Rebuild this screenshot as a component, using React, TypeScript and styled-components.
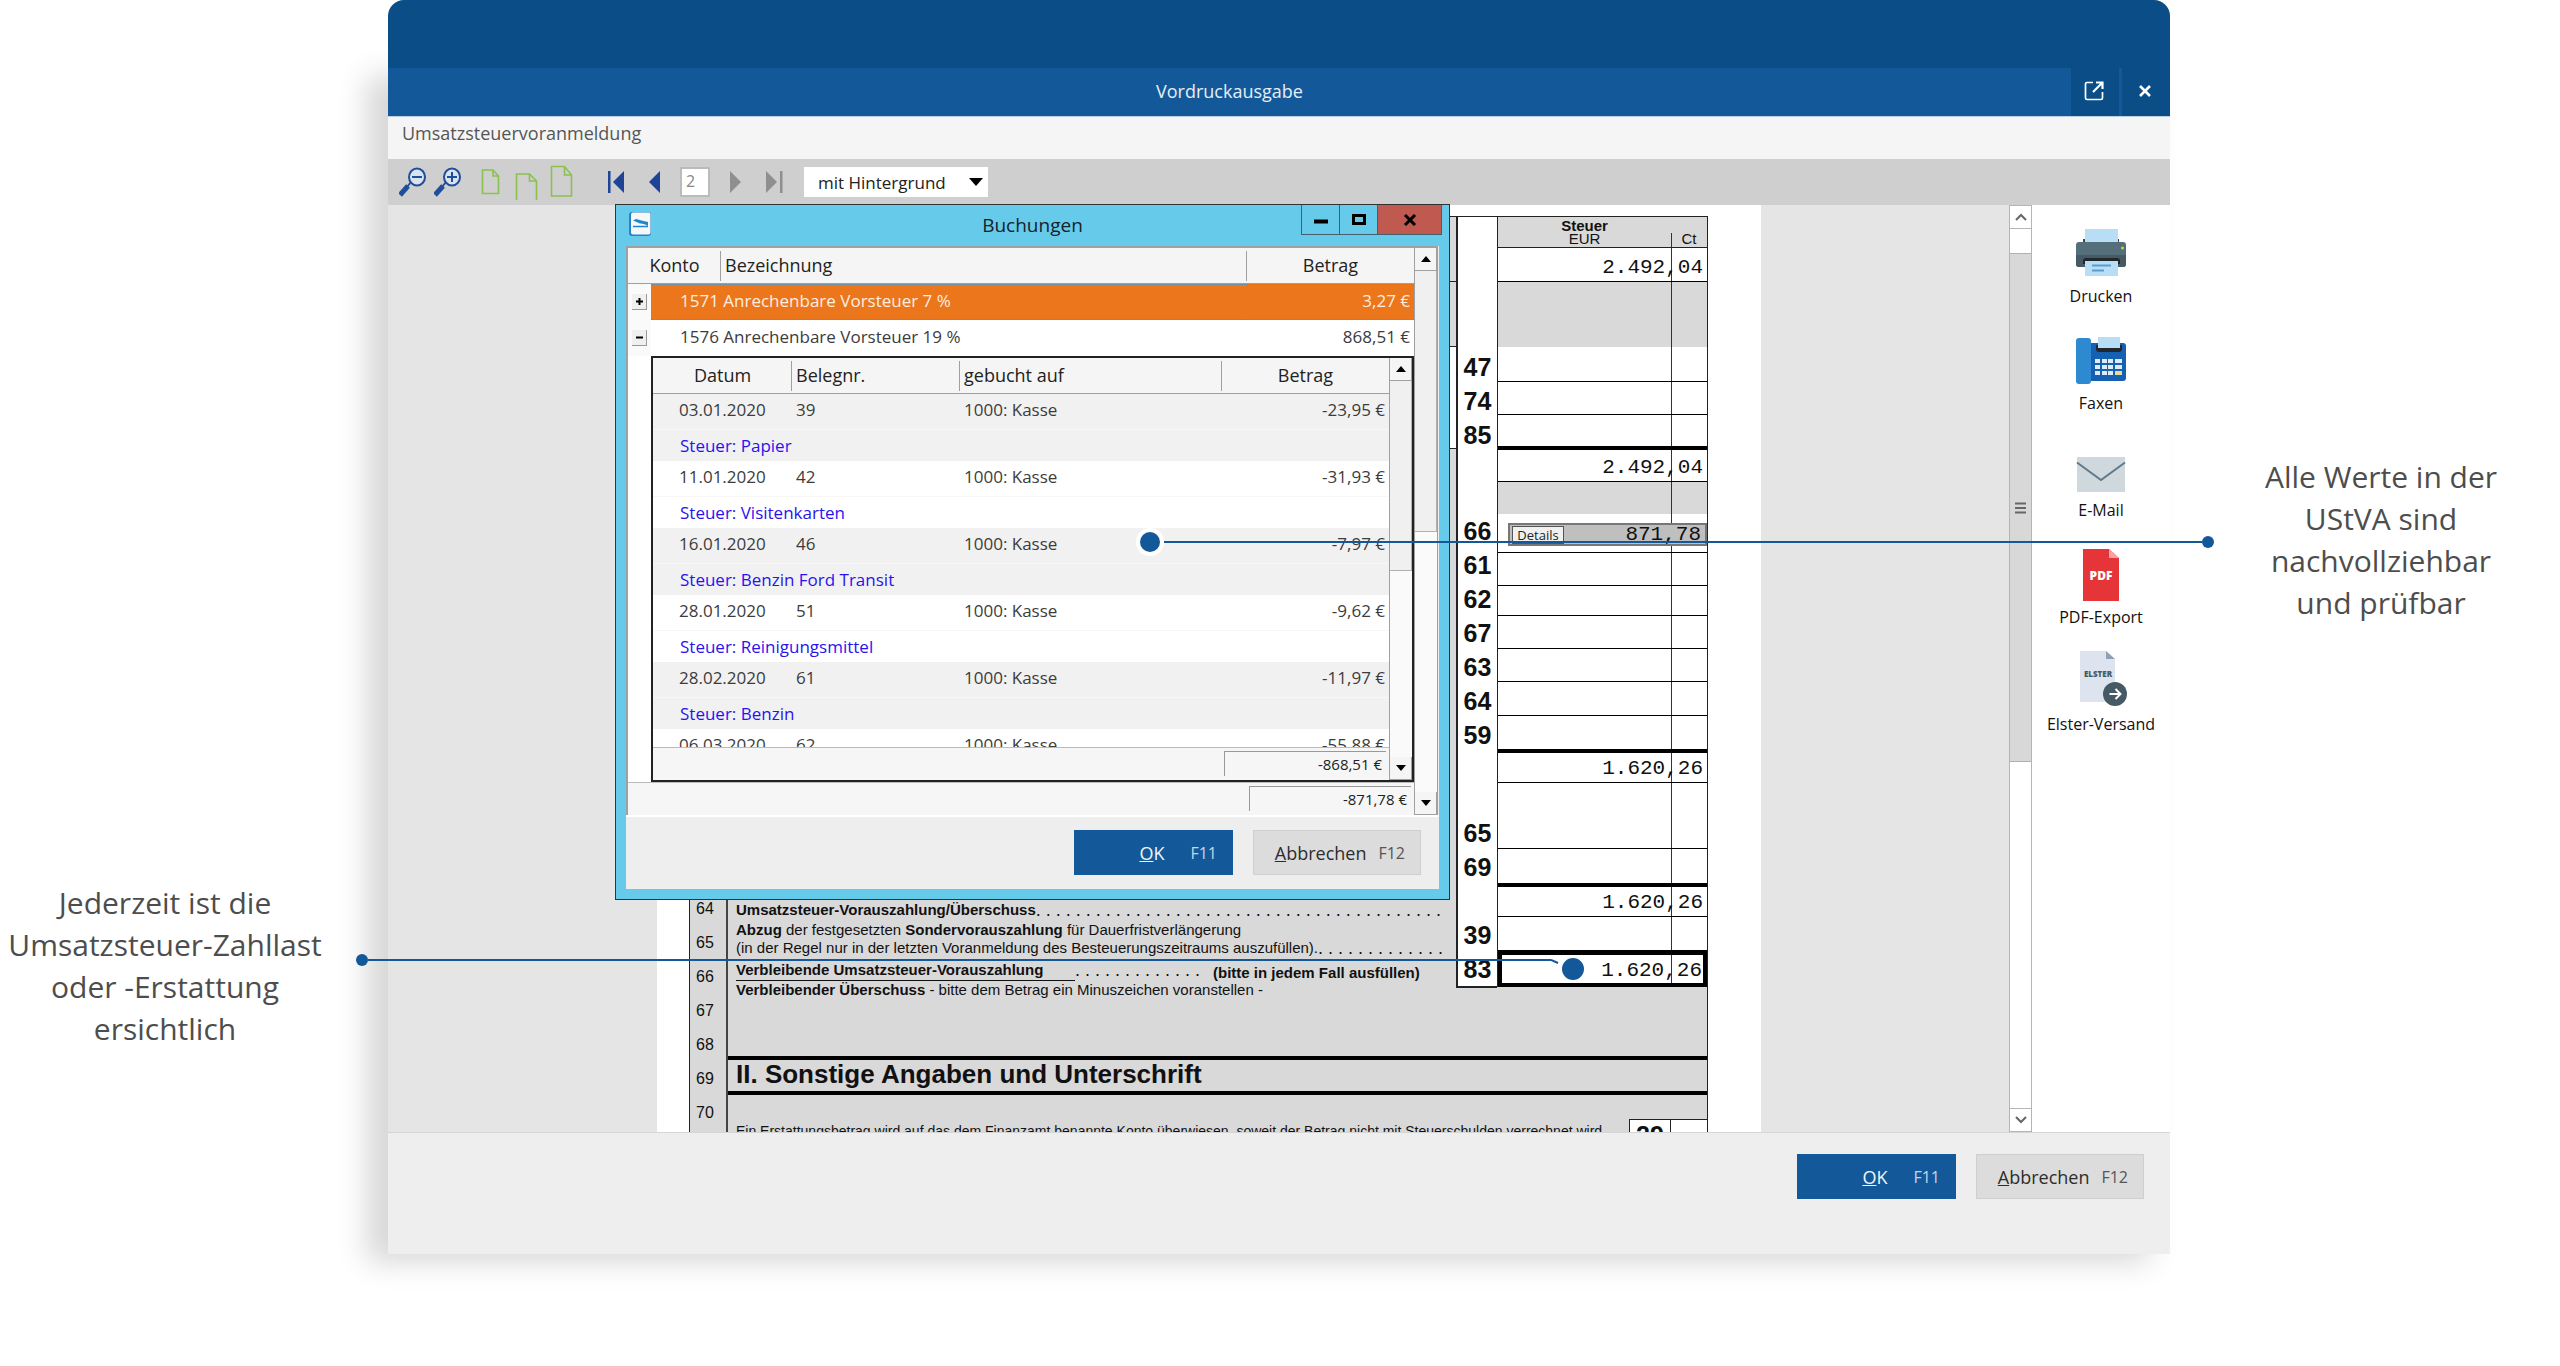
import React from "react";
import styled, { createGlobalStyle, css } from "styled-components";

const navy = "#0b4d86";
const blue = "#135999";
const sky = "#66cbea";
const formGrey = "#d9d9d9";
const ink = "#222";
const uiFont = `"Open Sans", "Noto Sans", sans-serif`;
const formFont = `"Liberation Sans", Arial, sans-serif`;

const GlobalStyle = createGlobalStyle`
  *, *::before, *::after { box-sizing: border-box; }
  body { margin: 0; background: #fff; font-family: ${uiFont}; color: #333; }
  button, input, select { font-family: inherit; }
  button { cursor: pointer; }
  table { border-collapse: separate; border-spacing: 0; table-layout: fixed; width: 100%; }
  th, td { padding: 0; font-weight: 400; text-align: left; }
`;

/* ---------- page and callouts ---------- */

const Stage = styled.main`
  display: grid;
  grid-template-columns: 388px minmax(0, 1fr) 390px;
  height: 100vh;
  padding-bottom: 112px;
  overflow: hidden;
`;

const Callout = styled.p<{ $side: "left" | "right" }>`
  margin: 0;
  text-align: center;
  font-size: 30px;
  line-height: 42px;
  color: #4d4d4d;
  padding: ${(p) => (p.$side === "left" ? "882px 58px 0 0" : "456px 0 0 32px")};
`;

const Line = styled.span`
  display: block;
`;

const Connector = styled.div<{ $side: "left" | "right" }>`
  position: absolute;
  display: flex;
  pointer-events: none;
  ${(p) =>
    p.$side === "right"
      ? css`
          top: 528px;
          left: 748px;
          right: -44px;
          align-items: center;
        `
      : css`
          top: 954px;
          left: -32px;
          width: 1231px;
          align-items: flex-start;
        `}
`;

const EndDot = styled.span`
  width: 12px;
  height: 12px;
  border-radius: 50%;
  background: ${blue};
`;

const RingDot = styled.span<{ $low?: boolean }>`
  width: 28px;
  height: 28px;
  border-radius: 50%;
  border: ${(p) => (p.$low ? "3px" : "4px")} solid #fff;
  margin-top: ${(p) => (p.$low ? "1px" : "0")};
  background: ${blue};
`;

const Wire = styled.span<{ $low?: boolean }>`
  flex: 1;
  height: 2px;
  background: ${blue};
  margin-top: ${(p) => (p.$low ? "5px" : "0")};
`;

const Bend = styled.svg`
  width: 8px;
  height: 6px;
  margin-top: 5px;
`;

/* ---------- main window ---------- */

const Window = styled.section`
  position: relative;
  display: flex;
  flex-direction: column;
  min-height: 0;
`;

const TopBand = styled.div`
  height: 68px;
  flex: none;
  background: ${navy};
  border-radius: 16px 16px 0 0;
  position: relative;
`;

const Shell = styled.div`
  flex: 1;
  min-height: 0;
  display: flex;
  flex-direction: column;
  background: #eee;
  box-shadow: -21px 8px 28px rgba(0, 0, 0, 0.16);
`;

const TitleBar = styled.header`
  display: flex;
  flex: none;
  height: 49px;
  background: ${blue};
  border-bottom: 1px solid #b8cfe3;
`;

const Title = styled.h1`
  flex: 1;
  margin: 0;
  text-align: center;
  font-size: 18px;
  line-height: 46px;
  font-weight: 400;
  color: #e6eef6;
`;

const TitleActions = styled.div`
  display: flex;
  gap: 3px;
`;

const TitleButton = styled.button`
  width: 48px;
  border: 0;
  padding: 0 2px 2px 0;
  background: ${navy};
  display: grid;
  place-items: center;
`;

const SubTitle = styled.div`
  flex: none;
  height: 42px;
  padding-left: 14px;
  background: #f5f5f5;
  font-size: 18px;
  line-height: 32px;
  color: #555;
`;

const Toolbar = styled.div`
  flex: none;
  height: 46px;
  display: flex;
  align-items: center;
  gap: 9px;
  padding-left: 7px;
  background: #cfcfcf;
`;

const ToolGroup = styled.div<{ $apart?: boolean }>`
  display: flex;
  align-items: center;
  margin-left: ${(p) => (p.$apart ? "9px" : "0")};
`;

const ToolButton = styled.button<{ $wide?: boolean }>`
  width: ${(p) => (p.$wide ? "38px" : "35px")};
  height: 36px;
  border: 0;
  padding: 0;
  background: none;
  display: grid;
  place-items: center;
`;

const PageInput = styled.input`
  width: 30px;
  height: 30px;
  margin: 0 7px;
  padding: 0 4px 2px;
  border: 2px solid #bbb;
  background: #fff;
  font-size: 16px;
  color: #888;
`;

const SelectBox = styled.div`
  display: grid;
  align-items: center;
  width: 184px;
  height: 30px;
  margin-left: 2px;
  background: #fff;
  & > * {
    grid-area: 1 / 1;
  }
  svg {
    justify-self: end;
    margin-right: 5px;
    pointer-events: none;
  }
`;

const Select = styled.select`
  appearance: none;
  width: 100%;
  height: 30px;
  border: 0;
  padding: 0 24px 0 14px;
  background: transparent;
  font-size: 17px;
  color: #222;
`;

const Workspace = styled.div`
  flex: 1;
  min-height: 0;
  display: flex;
  background: #fff;
`;

const Viewer = styled.div`
  flex: 1;
  min-width: 0;
  display: flex;
  justify-content: center;
  align-items: flex-start;
  overflow: hidden;
  padding-left: 21px;
  background: #e5e5e5;
`;

const Scroller = styled.div`
  flex: none;
  width: 23px;
  display: flex;
  flex-direction: column;
  border: 1px solid #b5b5b5;
  background: #fff;
`;

const ScrollerButton = styled.button<{ $edge: "top" | "bottom" }>`
  height: 23px;
  border: 0 solid #b5b5b5;
  ${(p) => (p.$edge === "top" ? "border-bottom-width: 1px;" : "border-top-width: 1px;")}
  padding: 0;
  background: #fff;
  display: grid;
  place-items: center;
`;

const ScrollerTrack = styled.div`
  flex: 1;
  display: flex;
  flex-direction: column;
  padding: 24px 0 346px;
`;

const ScrollerThumb = styled.div`
  flex: 1;
  display: grid;
  place-items: center;
  border: solid #b0b0b0;
  border-width: 1px 0;
  background: #d8d8d8;
`;

const Sidebar = styled.nav`
  flex: none;
  width: 138px;
  display: flex;
  flex-direction: column;
  align-items: center;
  padding-top: 22px;
`;

const SideAction = styled.button`
  width: 138px;
  height: 107px;
  border: 0;
  padding: 0;
  background: none;
  display: flex;
  flex-direction: column;
  align-items: center;
  font-size: 16px;
  line-height: 22px;
  color: #111;
`;

const SideIcon = styled.svg`
  width: 64px;
  height: 58px;
  flex: none;
  overflow: visible;
`;

const Footer = styled.footer`
  flex: none;
  display: flex;
  justify-content: flex-end;
  gap: 20px;
  height: 122px;
  padding: 21px 26px 0 0;
  border-top: 1px solid #d5d5d5;
  background: #eee;
`;

const ActionButton = styled.button<{ $primary?: boolean }>`
  width: ${(p) => (p.$primary ? "159px" : "168px")};
  height: 45px;
  display: flex;
  align-items: center;
  justify-content: flex-end;
  gap: ${(p) => (p.$primary ? "26px" : "12px")};
  padding: 0 15px 0 0;
  border: 1px solid ${(p) => (p.$primary ? blue : "#cfcfcf")};
  background: ${(p) => (p.$primary ? blue : "#dcdcdc")};
  color: ${(p) => (p.$primary ? "#f0f5fa" : "#2d2d2d")};
  font-size: 18px;
  line-height: 24px;
  font-weight: 500;
`;

const Hotkey = styled.span<{ $primary?: boolean }>`
  font-size: 16px;
  font-weight: 400;
  color: ${(p) => (p.$primary ? "#c4d6e8" : "#555")};
`;

/* ---------- tax form ---------- */

const Paper = styled.article`
  flex: none;
  width: 1104px;
  padding: 11px 53px 0 32px;
  background: #fff;
  font-family: ${formFont};
  color: #111;
`;

const Sheet = styled.div`
  display: flex;
  border: 1px solid ${ink};
  background: ${formGrey};
`;

const LineNumbers = styled.div`
  flex: none;
  width: 38px;
  padding: 675px 6px 0 0;
  border-right: 2px solid #444;
  text-align: center;
  font-size: 16px;
  line-height: 34px;
`;

const SheetBody = styled.div`
  flex: 1;
  min-width: 0;
`;

const CalcSection = styled.section`
  display: flex;
  align-items: flex-start;
`;

const Descriptions = styled.div`
  flex: 1;
  min-width: 0;
`;

const Band = styled.div<{ $tall?: boolean }>`
  height: ${(p) => (p.$tall ? "102px" : "65px")};
  border-bottom: 1px solid ${ink};
  background: ${(p) => (p.$tall ? "#fff" : formGrey)};
`;

const FormText = styled.div`
  padding: 452px 6px 0 8px;
  font-size: 15px;
  line-height: 18px;
`;

const FormLine = styled.div<{ $space?: number }>`
  display: flex;
  white-space: pre;
  margin-bottom: ${(p) => p.$space ?? 0}px;
`;

const Underlined = styled.b`
  width: 339px;
  height: 20px;
  border-bottom: 1px solid #111;
`;

const Leader = styled.span`
  font-size: 18px;
`;

const Hint = styled.b`
  padding: 3px 0 0 13px;
  line-height: 17px;
`;

const Codes = styled.div`
  flex: none;
  width: 41px;
  padding-top: 133px;
  border: solid ${ink};
  border-width: 0 0 2px 2px;
  background: #fff;
  font-size: 25px;
  line-height: 34px;
  font-weight: 700;
  text-align: center;
`;

const CodeGroup = styled.div<{ $before?: number }>`
  display: flex;
  flex-direction: column;
  padding-top: ${(p) => p.$before ?? 0}px;
`;

const Amounts = styled.table`
  flex: none;
  width: 210px;
  border-left: 1px solid ${ink};
  background: #fff;
`;

const AmountHead = styled.th<{ $cents?: boolean }>`
  height: 31px;
  vertical-align: bottom;
  text-align: center;
  font-size: 15px;
  line-height: 13px;
  padding-bottom: 2px;
  border-bottom: 1px solid ${ink};
  background: ${formGrey};
  ${(p) =>
    p.$cents &&
    css`
      background: linear-gradient(#333, #333) left bottom / 1px 14px no-repeat ${formGrey};
    `}
`;

const AmountCell = styled.td<{ $h: number; $rule: "none" | "thin" | "thick" | "box"; $grey?: boolean }>`
  height: ${(p) => p.$h}px;
  vertical-align: bottom;
  text-align: right;
  padding: 0 4px 1px 0;
  font-family: "Liberation Mono", "Courier New", monospace;
  font-size: 21px;
  line-height: 24px;
  border: 0 solid #000;
  border-bottom-width: ${(p) => ({ none: 0, thin: 1, thick: 4, box: 4 })[p.$rule]}px;
  background: linear-gradient(#333, #333) 173px 0 / 1px 100% no-repeat ${(p) => (p.$grey ? formGrey : "#fff")};
  background-origin: border-box;
  ${(p) =>
    p.$rule === "box" &&
    css`
      border-width: 4px;
      padding: 0 1px 0 0;
    `}
`;

const DetailField = styled.div`
  display: flex;
  align-items: center;
  justify-content: space-between;
  height: 23px;
  margin: 0 -4px 5px 10px;
  padding: 0 4px 0 2px;
  border: 2px solid #777;
  background: #bfbfbf;
`;

const DetailButton = styled.button`
  width: 52px;
  height: 18px;
  padding: 0;
  border: 1px solid #555;
  background: #f0f0f0;
  font-family: ${uiFont};
  font-size: 13px;
  line-height: 16px;
  color: #222;
`;

const Gap = styled.div`
  height: 57px;
`;

const SectionTitle = styled.h2`
  margin: 0;
  padding: 0 8px 3px;
  border: solid #000;
  border-width: 4px 0;
  font-size: 26px;
  line-height: 28px;
  font-weight: 700;
`;

const RefundRow = styled.div`
  display: flex;
  justify-content: space-between;
  padding-top: 24px;
`;

const RefundText = styled.p`
  margin: 0;
  padding: 3px 0 0 8px;
  font-size: 14px;
  line-height: 18px;
  white-space: nowrap;
`;

const RefundBox = styled.div`
  flex: none;
  display: flex;
  border: solid ${ink};
  border-width: 1px 0 0 1px;
  background: #fff;
  font-size: 25px;
  line-height: 30px;
  font-weight: 700;
`;

const RefundCell = styled.span<{ $last?: boolean }>`
  width: ${(p) => (p.$last ? "36px" : "41px")};
  text-align: center;
  border-right: ${(p) => (p.$last ? "0" : `1px solid ${ink}`)};
`;

/* ---------- bookings dialog ---------- */

const Dialog = styled.section`
  position: absolute;
  left: 227px;
  top: 204px;
  width: 835px;
  height: 696px;
  display: flex;
  flex-direction: column;
  border: 1px solid #333;
  padding: 0 10px 10px;
  background: ${sky};
`;

const DialogBar = styled.header`
  flex: none;
  height: 41px;
  display: grid;
  grid-template-columns: 137px 1fr 137px;
`;

const DialogTitle = styled.h2`
  margin: 0;
  text-align: center;
  font-size: 19px;
  line-height: 40px;
  font-weight: 400;
  color: #16222b;
`;

const AppIcon = styled.svg`
  width: 22px;
  height: 24px;
  margin: 7px 0 0 3px;
`;

const Caption = styled.div`
  display: flex;
  height: 30px;
  margin-right: -3px;
`;

const CaptionButton = styled.button<{ $close?: boolean }>`
  flex: ${(p) => (p.$close ? "0 0 65px" : "1")};
  padding: 0;
  margin-left: -1px;
  border: 1px solid #44606c;
  border-top: 0;
  background: ${(p) => (p.$close ? "#c0594f" : sky)};
  display: grid;
  place-items: center;
`;

const DialogBody = styled.div`
  flex: 1;
  min-height: 0;
  display: flex;
  flex-direction: column;
  background: #eee;
`;

const Panel = styled.div`
  flex: 1;
  min-height: 0;
  display: flex;
  margin-right: 1px;
  border: solid #a0a0a0;
  border-width: 2px 1px 0 2px;
  background: #fff;
`;

const PanelMain = styled.div`
  flex: 1;
  min-width: 0;
  display: flex;
  flex-direction: column;
`;

const HeadCell = styled.th<{ $center?: boolean; $last?: boolean }>`
  height: 36px;
  padding: 0 0 1px ${(p) => (p.$center ? "0" : "4px")};
  text-align: ${(p) => (p.$center ? "center" : "left")};
  font-size: 18px;
  line-height: 30px;
  font-weight: 400;
  color: #222;
  border-bottom: 1px solid #a0a0a0;
  background: ${(p) =>
    p.$last ? "#f5f5f5" : "linear-gradient(#a0a0a0, #a0a0a0) right center / 1px 30px no-repeat #f5f5f5"};
`;

const AccountCell = styled.td<{ $active?: boolean; $amount?: boolean }>`
  height: 36px;
  padding: ${(p) => (p.$amount ? "0 4px 3px 0" : "0 0 3px 29px")};
  text-align: ${(p) => (p.$amount ? "right" : "left")};
  font-size: 17px;
  line-height: 24px;
  color: ${(p) => (p.$active ? "#fdeee0" : "#3c3c3c")};
  background: ${(p) => (p.$active ? "#ec761c" : "#fff")};
  border: 0 dotted #6d8aa0;
  border-width: ${(p) => (p.$active ? "1px 0" : "0")};
`;

const ToggleCell = styled.td`
  padding-left: 4px;
  background: #fafafa;
`;

const Toggle = styled.button`
  display: grid;
  place-items: center;
  width: 15px;
  height: 16px;
  padding: 0;
  border: solid #999;
  border-width: 0 1px 1px 0;
  background: #f0f0f0;
`;

const Nested = styled.div`
  flex: 1;
  min-height: 0;
  display: flex;
  margin-left: 23px;
  border: 2px solid ${ink};
  background: #fff;
`;

const NestedMain = styled.div`
  flex: 1;
  min-width: 0;
  display: flex;
  flex-direction: column;
`;

const Rows = styled.div`
  flex: 1;
  min-height: 0;
  overflow: hidden;
`;

const BookingCell = styled.td<{ $shade: boolean; $pad?: number; $amount?: boolean }>`
  height: 36px;
  vertical-align: top;
  padding: 0 ${(p) => (p.$amount ? "4px" : "0")} 0 ${(p) => p.$pad ?? 4}px;
  text-align: ${(p) => (p.$amount ? "right" : "left")};
  font-size: 17px;
  line-height: 32px;
  color: #3c3c3c;
  border-bottom: 1px solid #f7f7f7;
  background: ${(p) => (p.$shade ? "#f1f1f1" : "#fff")};
`;

const NoteCell = styled.td<{ $shade: boolean }>`
  height: 31px;
  padding-left: 27px;
  font-size: 17px;
  line-height: 31px;
  color: #2a12f0;
  background: ${(p) => (p.$shade ? "#f1f1f1" : "#fff")};
`;

const SumBar = styled.div`
  flex: none;
  height: 33px;
  display: flex;
  justify-content: flex-end;
  padding: 3px 3px 4px;
  border-top: 1px solid #bbb;
  background: #f6f6f6;
`;

const Sum = styled.output`
  width: 162px;
  padding-right: 4px;
  border: solid #999;
  border-width: 1px 0 0 1px;
  text-align: right;
  font-size: 15px;
  line-height: 24px;
  color: #222;
`;

const MiniScroller = styled.div`
  flex: none;
  width: 23px;
  display: flex;
  flex-direction: column;
  justify-content: space-between;
  border-left: 1px solid #a0a0a0;
  background: #fafafa;
`;

const MiniThumb = styled.div<{ $share: number }>`
  flex: 0 0 ${(p) => p.$share}%;
  margin-bottom: auto;
  border: solid #b0b0b0;
  border-width: 0 1px 1px 0;
  background: #f0f0f0;
`;

const MiniButton = styled.button`
  flex: none;
  height: 23px;
  padding: 0;
  border: solid #a0a0a0;
  border-width: 0 1px 1px 0;
  background: #f5f5f5;
  display: grid;
  place-items: center;
`;

const DialogFooter = styled.footer`
  flex: none;
  display: flex;
  justify-content: flex-end;
  gap: 20px;
  height: 74px;
  padding: 13px 18px 0 0;
  border-top: 2px solid #fff;
`;

/* ---------- data ---------- */

const bookings = [
  ["03.01.2020", "39", "-23,95 €", "Papier"],
  ["11.01.2020", "42", "-31,93 €", "Visitenkarten"],
  ["16.01.2020", "46", "-7,97 €", "Benzin Ford Transit"],
  ["28.01.2020", "51", "-9,62 €", "Reinigungsmittel"],
  ["28.02.2020", "61", "-11,97 €", "Benzin"],
  ["06.03.2020", "62", "-55,88 €", ""],
];

type Amount = { h: number; rule: "none" | "thin" | "thick" | "box"; grey?: boolean; value?: string; detail?: boolean };

const amounts: Amount[] = [
  { h: 34, rule: "thin", value: "2.492,04" },
  { h: 65, rule: "none", grey: true },
  { h: 35, rule: "thin" },
  { h: 33, rule: "thin" },
  { h: 35, rule: "thick" },
  { h: 32, rule: "thin", value: "2.492,04" },
  { h: 32, rule: "none", grey: true },
  { h: 39, rule: "thin", value: "871,78", detail: true },
  { h: 33, rule: "thin" },
  { h: 30, rule: "thin" },
  { h: 33, rule: "thin" },
  { h: 33, rule: "thin" },
  { h: 34, rule: "thin" },
  { h: 37, rule: "thick" },
  { h: 30, rule: "thin", value: "1.620,26" },
  { h: 66, rule: "thin" },
  { h: 38, rule: "thick" },
  { h: 30, rule: "thin", value: "1.620,26" },
  { h: 34, rule: "thin" },
  { h: 36, rule: "box", value: "1.620,26" },
];

const codeGroups = [
  { before: 0, codes: ["47", "74", "85"] },
  { before: 62, codes: ["66", "61", "62", "67", "63", "64", "59"] },
  { before: 64, codes: ["65", "69"] },
  { before: 34, codes: ["39", "83"] },
];

/* ---------- icons ---------- */

const Magnifier = ({ plus }: { plus?: boolean }) => (
  <svg width="28" height="30" viewBox="0 0 28 30" fill="none" stroke="#1f4e9a">
    <path d="M9 19 L1 28" strokeWidth="5" />
    <path d="M12 15 L8 20" strokeWidth="2" />
    <ellipse cx="18" cy="10" rx="8" ry="8.5" strokeWidth="2" fill="#d9e3ee" />
    <path d={plus ? "M13 10H23M18 5V15" : "M13 10H23"} strokeWidth="2" />
  </svg>
);

const PageIcon = ({ kind }: { kind: "small" | "open" | "large" }) => {
  const path = {
    small: "M2.5 5H13L18.5 11V28.5H2.5ZM13 5V11H18.5",
    open: "M1.5 35V9H14.5L21.5 16V35M14.5 9V16H21.5",
    large: "M1.5 1.5H14.5L21.5 10V31H1.5ZM14.5 1.5V10H21.5",
  }[kind];
  return (
    <svg width="23" height="35" viewBox="0 0 23 35" fill="none" stroke="#8cc152" strokeWidth="1.6">
      <path d={path} />
    </svg>
  );
};

const NavIcon = ({ dir, bar }: { dir: "back" | "forward"; bar?: boolean }) => (
  <svg width="18" height="24" viewBox="0 0 18 24" fill={dir === "back" ? "#1f4396" : "#8f8f8f"}>
    {dir === "back" ? <path d={bar ? "M17 1V23L6 12Z" : "M15 1V23L4 12Z"} /> : <path d={bar ? "M1 1V23L12 12Z" : "M3 1V23L14 12Z"} />}
    {bar && <rect x={dir === "back" ? 1 : 15} y="1" width="2.5" height="22" />}
  </svg>
);

const Triangle = ({ up }: { up?: boolean }) => (
  <svg width="12" height="8" viewBox="0 0 12 8" fill="#000">
    <path d={up ? "M1 7H11L6 1Z" : "M1 1H11L6 7Z"} />
  </svg>
);

const Chevron = ({ up }: { up?: boolean }) => (
  <svg width="12" height="8" viewBox="0 0 12 8" fill="none" stroke="#666" strokeWidth="2">
    <path d={up ? "M1 7L6 2L11 7" : "M1 1L6 6L11 1"} />
  </svg>
);

const PrinterIcon = () => (
  <SideIcon viewBox="0 0 64 58">
    <path d="M14 12h36v8H14z" fill="#37474f" />
    <rect x="16" y="2" width="33" height="14" fill="#b8def5" />
    <rect x="7" y="15" width="50" height="25" rx="3" fill="#546e7a" />
    <path d="M7 28h50v9a3 3 0 0 1-3 3H10a3 3 0 0 1-3-3z" fill="#455a64" />
    <path d="M14 37v-3q0-3 3-3h31q3 0 3 3v3z" fill="#20282d" />
    <rect x="16" y="34" width="33" height="15" fill="#b8def5" />
    <path d="M23 38.500h19M23 43.500h12" stroke="#5b9bd0" strokeWidth="2" />
    <circle cx="53.500" cy="21" r="1.500" fill="#b2e03c" />
  </SideIcon>
);

const FaxIcon = () => (
  <SideIcon viewBox="0 0 64 58">
    <rect x="14" y="9" width="43" height="38" rx="3" fill="#1560b0" />
    <rect x="7" y="4" width="15" height="46" rx="3" fill="#2d8ad0" />
    <path d="M27 11h26v4q0 3-3 3H30q-3 0-3-3z" fill="#20282d" />
    <rect x="29" y="3" width="22" height="11" fill="#b8def5" />
    {[25, 31, 37].map((y) =>
      [26, 33, 39, 46].map((x) => (
        <rect key={`${x}-${y}`} x={x} y={y} width={x === 46 ? 7 : 5} height="4" fill={x === 46 && y === 37 ? "#e8dc9a" : "#dcebf7"} />
      ))
    )}
  </SideIcon>
);

const MailIcon = () => (
  <SideIcon viewBox="0 0 64 58">
    <rect x="8" y="16" width="48" height="35" fill="#cfd8dc" />
    <path d="M8 21.500L32 39L56 21.500" fill="none" stroke="#5f7a8c" strokeWidth="2" />
  </SideIcon>
);

const PdfIcon = () => (
  <SideIcon viewBox="0 0 64 58">
    <path d="M14 1h26l10 9v43H14z" fill="#e53539" />
    <path d="M40 1l10 9H40z" fill="#f5a3a4" />
    <text x="32" y="32" fontSize="12" fontWeight="800" textAnchor="middle" fill="#fff">
      PDF
    </text>
  </SideIcon>
);

const ElsterIcon = () => (
  <SideIcon viewBox="0 0 64 58">
    <path d="M11 -4h26l9 8v43H11z" fill="#dde4f0" />
    <path d="M37 -4l9 8H37z" fill="#8fa1b5" />
    <text x="29" y="22" fontSize="8" fontWeight="800" textAnchor="middle" fill="#455a64">
      ELSTER
    </text>
    <circle cx="46" cy="39" r="12" fill="#455a64" />
    <path d="M40.500 39H51M46.500 34l5 5l-5 5" fill="none" stroke="#fff" strokeWidth="2" />
  </SideIcon>
);

/* ---------- composed parts ---------- */

const Actions = () => (
  <>
    <ActionButton $primary type="button">
      <span>
        <u>O</u>K
      </span>
      <Hotkey $primary>F11</Hotkey>
    </ActionButton>
    <ActionButton type="button">
      <span>
        <u>A</u>bbrechen
      </span>
      <Hotkey>F12</Hotkey>
    </ActionButton>
  </>
);

const dots = (n: number) => Array(n).fill(".").join(" ");

const TaxForm = () => (
  <Paper>
    <Sheet>
      <LineNumbers>
        {[64, 65, 66, 67, 68, 69, 70].map((n) => (
          <Line key={n}>{n}</Line>
        ))}
      </LineNumbers>
      <SheetBody>
        <CalcSection>
          <Descriptions>
            <Band />
            <Band />
            <Band $tall />
            <FormText>
              <FormLine $space={2}>
                <b>Umsatzsteuer-Vorauszahlung/Überschuss</b>
                <Leader>{dots(41)}</Leader>
              </FormLine>
              <FormLine>
                <b>Abzug</b> der festgesetzten <b>Sondervorauszahlung</b> für Dauerfristverlängerung
              </FormLine>
              <FormLine $space={4}>
                (in der Regel nur in der letzten Voranmeldung des Besteuerungszeitraums auszufüllen).
                <Leader>{dots(13)}</Leader>
              </FormLine>
              <FormLine>
                <Underlined>Verbleibende Umsatzsteuer-Vorauszahlung</Underlined>
                <Leader>{dots(13)}</Leader>
                <Hint>(bitte in jedem Fall ausfüllen)</Hint>
              </FormLine>
              <FormLine>
                <b>Verbleibender Überschuss</b> - bitte dem Betrag ein Minuszeichen voranstellen -
              </FormLine>
            </FormText>
          </Descriptions>
          <Codes>
            {codeGroups.map((g) => (
              <CodeGroup key={g.codes[0]} $before={g.before}>
                {g.codes.map((c) => (
                  <span key={c}>{c}</span>
                ))}
              </CodeGroup>
            ))}
          </Codes>
          <Amounts>
            <colgroup>
              <col />
              <col width="36" />
            </colgroup>
            <thead>
              <tr>
                <AmountHead>
                  <b>Steuer</b>
                  <br />
                  EUR
                </AmountHead>
                <AmountHead $cents>Ct</AmountHead>
              </tr>
            </thead>
            <tbody>
              {amounts.map((a, i) => (
                <tr key={i}>
                  <AmountCell colSpan={2} $h={a.h} $rule={a.rule} $grey={a.grey}>
                    {a.detail ? (
                      <DetailField>
                        <DetailButton type="button">Details</DetailButton>
                        {a.value}
                      </DetailField>
                    ) : (
                      a.value
                    )}
                  </AmountCell>
                </tr>
              ))}
            </tbody>
          </Amounts>
        </CalcSection>
        <Gap />
        <SectionTitle>II. Sonstige Angaben und Unterschrift</SectionTitle>
        <RefundRow>
          <RefundText>
            Ein Erstattungsbetrag wird auf das dem Finanzamt benannte Konto überwiesen, soweit der Betrag nicht mit
            Steuerschulden verrechnet wird.
          </RefundText>
          <RefundBox>
            <RefundCell>29</RefundCell>
            <RefundCell $last />
          </RefundBox>
        </RefundRow>
      </SheetBody>
    </Sheet>
  </Paper>
);

const MiniScroll = ({ share }: { share: number }) => (
  <MiniScroller>
    <MiniButton type="button" aria-label="Nach oben">
      <Triangle up />
    </MiniButton>
    <MiniThumb $share={share} />
    <MiniButton type="button" aria-label="Nach unten">
      <Triangle />
    </MiniButton>
  </MiniScroller>
);

const BookingColumns = () => (
  <colgroup>
    <col width="139" />
    <col width="168" />
    <col />
    <col width="167" />
  </colgroup>
);

const BookingsDialog = () => (
  <Dialog role="dialog" aria-label="Buchungen">
    <DialogBar>
      <AppIcon viewBox="0 0 22 24">
        <rect x="0" y="0" width="22" height="24" rx="3" fill="#2f7fc4" />
        <rect x="2" y="0.500" width="19.500" height="22" rx="2" fill="#f4f8fb" />
        <path d="M4 8.500l3-1.500q7 2 12 3v4q-4-3-8-2.500z" fill="#1f86cc" />
        <path d="M4 14.500h15" stroke="#1f86cc" strokeWidth="1.500" />
      </AppIcon>
      <DialogTitle>Buchungen</DialogTitle>
      <Caption>
        <CaptionButton type="button" aria-label="Minimieren">
          <svg width="14" height="14" viewBox="0 0 14 14">
            <path d="M0 8.500H14" stroke="#000" strokeWidth="4" />
          </svg>
        </CaptionButton>
        <CaptionButton type="button" aria-label="Maximieren">
          <svg width="14" height="12" viewBox="0 0 14 12">
            <rect x="1.500" y="1.500" width="11" height="8" fill="none" stroke="#000" strokeWidth="3" />
          </svg>
        </CaptionButton>
        <CaptionButton $close type="button" aria-label="Schließen">
          <svg width="14" height="12" viewBox="0 0 14 12">
            <path d="M2 1L12 11M12 1L2 11" stroke="#000" strokeWidth="3" />
          </svg>
        </CaptionButton>
      </Caption>
    </DialogBar>
    <DialogBody>
      <Panel>
        <PanelMain>
          <table>
            <colgroup>
              <col width="23" />
              <col width="70" />
              <col />
              <col width="167" />
            </colgroup>
            <thead>
              <tr>
                <HeadCell $center colSpan={2}>
                  Konto
                </HeadCell>
                <HeadCell>Bezeichnung</HeadCell>
                <HeadCell $center $last>
                  Betrag
                </HeadCell>
              </tr>
            </thead>
            <tbody>
              <tr>
                <ToggleCell>
                  <Toggle type="button" aria-label="Aufklappen">
                    <svg width="9" height="9" viewBox="0 0 9 9" stroke="#000" strokeWidth="2">
                      <path d="M1 4.500H8M4.500 1V8" />
                    </svg>
                  </Toggle>
                </ToggleCell>
                <AccountCell $active colSpan={2}>
                  1571 Anrechenbare Vorsteuer 7 %
                </AccountCell>
                <AccountCell $active $amount>
                  3,27 €
                </AccountCell>
              </tr>
              <tr>
                <ToggleCell>
                  <Toggle type="button" aria-label="Zuklappen">
                    <svg width="9" height="9" viewBox="0 0 9 9" stroke="#000" strokeWidth="2">
                      <path d="M1 4.500H8" />
                    </svg>
                  </Toggle>
                </ToggleCell>
                <AccountCell colSpan={2}>1576 Anrechenbare Vorsteuer 19 %</AccountCell>
                <AccountCell $amount>868,51 €</AccountCell>
              </tr>
            </tbody>
          </table>
          <Nested>
            <NestedMain>
              <Rows>
                <table>
                  <BookingColumns />
                  <thead>
                    <tr>
                      <HeadCell $center>Datum</HeadCell>
                      <HeadCell>Belegnr.</HeadCell>
                      <HeadCell>gebucht auf</HeadCell>
                      <HeadCell $center $last>
                        Betrag
                      </HeadCell>
                    </tr>
                  </thead>
                  <tbody>
                    {bookings.map(([date, nr, amount, note], i) => (
                      <React.Fragment key={date}>
                        <tr>
                          <BookingCell $shade={i % 2 === 0} $pad={26}>
                            {date}
                          </BookingCell>
                          <BookingCell $shade={i % 2 === 0}>{nr}</BookingCell>
                          <BookingCell $shade={i % 2 === 0}>1000: Kasse</BookingCell>
                          <BookingCell $shade={i % 2 === 0} $amount>
                            {amount}
                          </BookingCell>
                        </tr>
                        {note && (
                          <tr>
                            <NoteCell $shade={i % 2 === 0} colSpan={4}>
                              Steuer: {note}
                            </NoteCell>
                          </tr>
                        )}
                      </React.Fragment>
                    ))}
                  </tbody>
                </table>
              </Rows>
              <SumBar>
                <Sum>-868,51 €</Sum>
              </SumBar>
            </NestedMain>
            <MiniScroll share={45} />
          </Nested>
          <SumBar>
            <Sum>-871,78 €</Sum>
          </SumBar>
        </PanelMain>
        <MiniScroll share={46} />
      </Panel>
      <DialogFooter>
        <Actions />
      </DialogFooter>
    </DialogBody>
  </Dialog>
);

export default function App() {
  return (
    <>
      <GlobalStyle />
      <Stage>
        <Callout $side="left">
          <Line>Jederzeit ist die</Line>
          <Line>Umsatzsteuer-Zahllast</Line>
          <Line>oder -Erstattung</Line>
          <Line>ersichtlich</Line>
        </Callout>

        <Window>
          <TopBand />
          <Shell>
            <TitleBar>
              <Title>Vordruckausgabe</Title>
              <TitleActions>
                <TitleButton type="button" aria-label="In neuem Fenster öffnen">
                  <svg width="20" height="20" viewBox="0 0 20 20" fill="none" stroke="#fff" strokeWidth="1.700">
                    <path d="M9 1.500H3Q1.500 1.500 1.500 3V17Q1.500 18.500 3 18.500H17Q18.500 18.500 18.500 17V11" />
                    <path d="M9 11L18 2M12 1.500H18.500V8" strokeWidth="2.200" />
                  </svg>
                </TitleButton>
                <TitleButton type="button" aria-label="Schließen">
                  <svg width="12" height="12" viewBox="0 0 12 12" stroke="#fff" strokeWidth="2.600">
                    <path d="M1 1L11 11M11 1L1 11" />
                  </svg>
                </TitleButton>
              </TitleActions>
            </TitleBar>
            <SubTitle>Umsatzsteuervoranmeldung</SubTitle>
            <Toolbar>
              <ToolGroup>
                <ToolButton type="button" aria-label="Verkleinern">
                  <Magnifier />
                </ToolButton>
                <ToolButton type="button" aria-label="Vergrößern">
                  <Magnifier plus />
                </ToolButton>
              </ToolGroup>
              <ToolGroup>
                <ToolButton type="button" aria-label="Ganze Seite">
                  <PageIcon kind="small" />
                </ToolButton>
                <ToolButton type="button" aria-label="Seitenbreite">
                  <PageIcon kind="open" />
                </ToolButton>
                <ToolButton type="button" aria-label="Originalgröße">
                  <PageIcon kind="large" />
                </ToolButton>
              </ToolGroup>
              <ToolGroup $apart>
                <ToolButton $wide type="button" aria-label="Erste Seite">
                  <NavIcon dir="back" bar />
                </ToolButton>
                <ToolButton $wide type="button" aria-label="Vorherige Seite">
                  <NavIcon dir="back" />
                </ToolButton>
                <PageInput aria-label="Seite" defaultValue="2" />
                <ToolButton $wide type="button" aria-label="Nächste Seite">
                  <NavIcon dir="forward" />
                </ToolButton>
                <ToolButton $wide type="button" aria-label="Letzte Seite">
                  <NavIcon dir="forward" bar />
                </ToolButton>
              </ToolGroup>
              <SelectBox>
                <Select aria-label="Darstellung">
                  <option>mit Hintergrund</option>
                </Select>
                <svg width="14" height="8" viewBox="0 0 14 8">
                  <path d="M0 0H14L7 8Z" />
                </svg>
              </SelectBox>
            </Toolbar>
            <Workspace>
              <Viewer>
                <TaxForm />
              </Viewer>
              <Scroller>
                <ScrollerButton $edge="top" type="button" aria-label="Nach oben">
                  <Chevron up />
                </ScrollerButton>
                <ScrollerTrack>
                  <ScrollerThumb>
                    <svg width="11" height="12" viewBox="0 0 11 12" stroke="#666" strokeWidth="2">
                      <path d="M0 1.500H11M0 6H11M0 10.500H11" />
                    </svg>
                  </ScrollerThumb>
                </ScrollerTrack>
                <ScrollerButton $edge="bottom" type="button" aria-label="Nach unten">
                  <Chevron />
                </ScrollerButton>
              </Scroller>
              <Sidebar>
                <SideAction type="button">
                  <PrinterIcon />
                  Drucken
                </SideAction>
                <SideAction type="button">
                  <FaxIcon />
                  Faxen
                </SideAction>
                <SideAction type="button">
                  <MailIcon />
                  E-Mail
                </SideAction>
                <SideAction type="button">
                  <PdfIcon />
                  PDF-Export
                </SideAction>
                <SideAction type="button">
                  <ElsterIcon />
                  Elster-Versand
                </SideAction>
              </Sidebar>
            </Workspace>
            <Footer>
              <Actions />
            </Footer>
          </Shell>

          <BookingsDialog />

          <Connector $side="right">
            <RingDot />
            <Wire />
            <EndDot />
          </Connector>
          <Connector $side="left">
            <EndDot />
            <Wire $low />
            <Bend viewBox="0 0 8 6">
              <path d="M0 1L7 4" stroke={blue} strokeWidth="2" fill="none" />
            </Bend>
            <RingDot $low />
          </Connector>
        </Window>

        <Callout $side="right">
          <Line>Alle Werte in der</Line>
          <Line>UStVA sind</Line>
          <Line>nachvollziehbar</Line>
          <Line>und prüfbar</Line>
        </Callout>
      </Stage>
    </>
  );
}
